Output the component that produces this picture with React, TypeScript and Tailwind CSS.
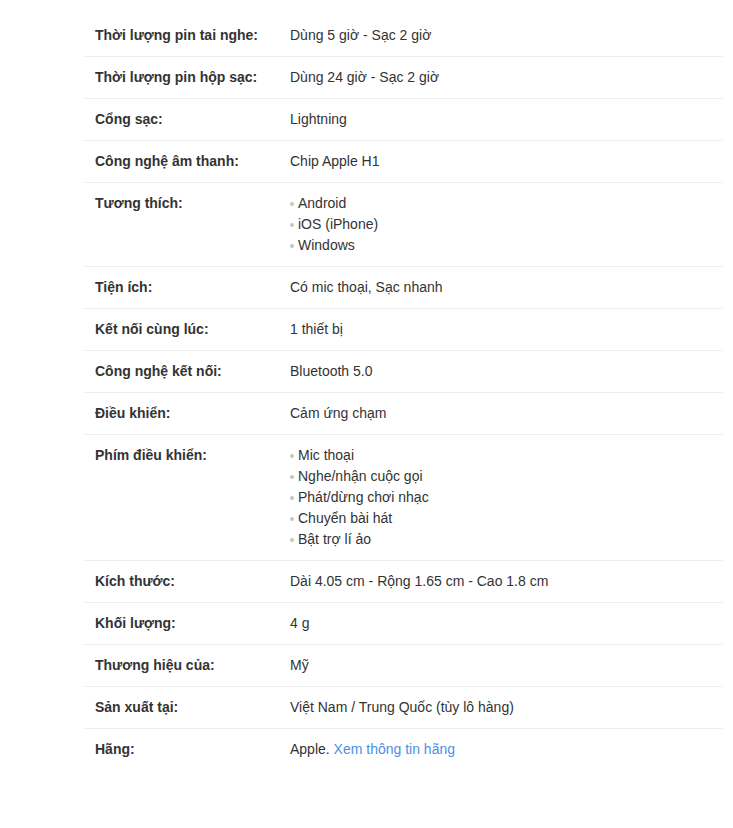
const SPECS: { label: string; value: string | string[]; link?: string }[] = [
  { label: 'Thời lượng pin tai nghe:', value: 'Dùng 5 giờ - Sạc 2 giờ' },
  { label: 'Thời lượng pin hộp sạc:', value: 'Dùng 24 giờ - Sạc 2 giờ' },
  { label: 'Cổng sạc:', value: 'Lightning' },
  { label: 'Công nghệ âm thanh:', value: 'Chip Apple H1' },
  { label: 'Tương thích:', value: ['Android', 'iOS (iPhone)', 'Windows'] },
  { label: 'Tiện ích:', value: 'Có mic thoại, Sạc nhanh' },
  { label: 'Kết nối cùng lúc:', value: '1 thiết bị' },
  { label: 'Công nghệ kết nối:', value: 'Bluetooth 5.0' },
  { label: 'Điều khiển:', value: 'Cảm ứng chạm' },
  {
    label: 'Phím điều khiển:',
    value: ['Mic thoại', 'Nghe/nhận cuộc gọi', 'Phát/dừng chơi nhạc', 'Chuyển bài hát', 'Bật trợ lí ảo'],
  },
  { label: 'Kích thước:', value: 'Dài 4.05 cm - Rộng 1.65 cm - Cao 1.8 cm' },
  { label: 'Khối lượng:', value: '4 g' },
  { label: 'Thương hiệu của:', value: 'Mỹ' },
  { label: 'Sản xuất tại:', value: 'Việt Nam / Trung Quốc (tùy lô hàng)' },
  { label: 'Hãng:', value: 'Apple. ', link: 'Xem thông tin hãng' },
];

export default function App() {
  return (
    <div className="min-h-[828px] bg-white font-['Liberation_Sans',Arial,sans-serif] text-[14px] leading-[21px] text-[#333]">
      <div className="ml-[84px] w-[639px] pt-[15px]">
        {SPECS.map((row, i) => (
          <div
            key={row.label}
            className={`flex py-[10px] ${i < SPECS.length - 1 ? 'border-b border-[#eeeeee]' : ''}`}
          >
            <div className="w-[206px] shrink-0 pl-[11px] font-bold">{row.label}</div>
            <div className="flex-1">
              {Array.isArray(row.value) ? (
                <ul>
                  {row.value.map((v) => (
                    <li key={v} className="flex items-center">
                      <span className="mr-[4px] inline-block h-[4px] w-[4px] rounded-full bg-[#c4c4c4]" />
                      {v}
                    </li>
                  ))}
                </ul>
              ) : (
                <span>
                  {row.value}
                  {row.link && <a className="text-[#4a8fe7]">{row.link}</a>}
                </span>
              )}
            </div>
          </div>
        ))}
      </div>
    </div>
  );
}
